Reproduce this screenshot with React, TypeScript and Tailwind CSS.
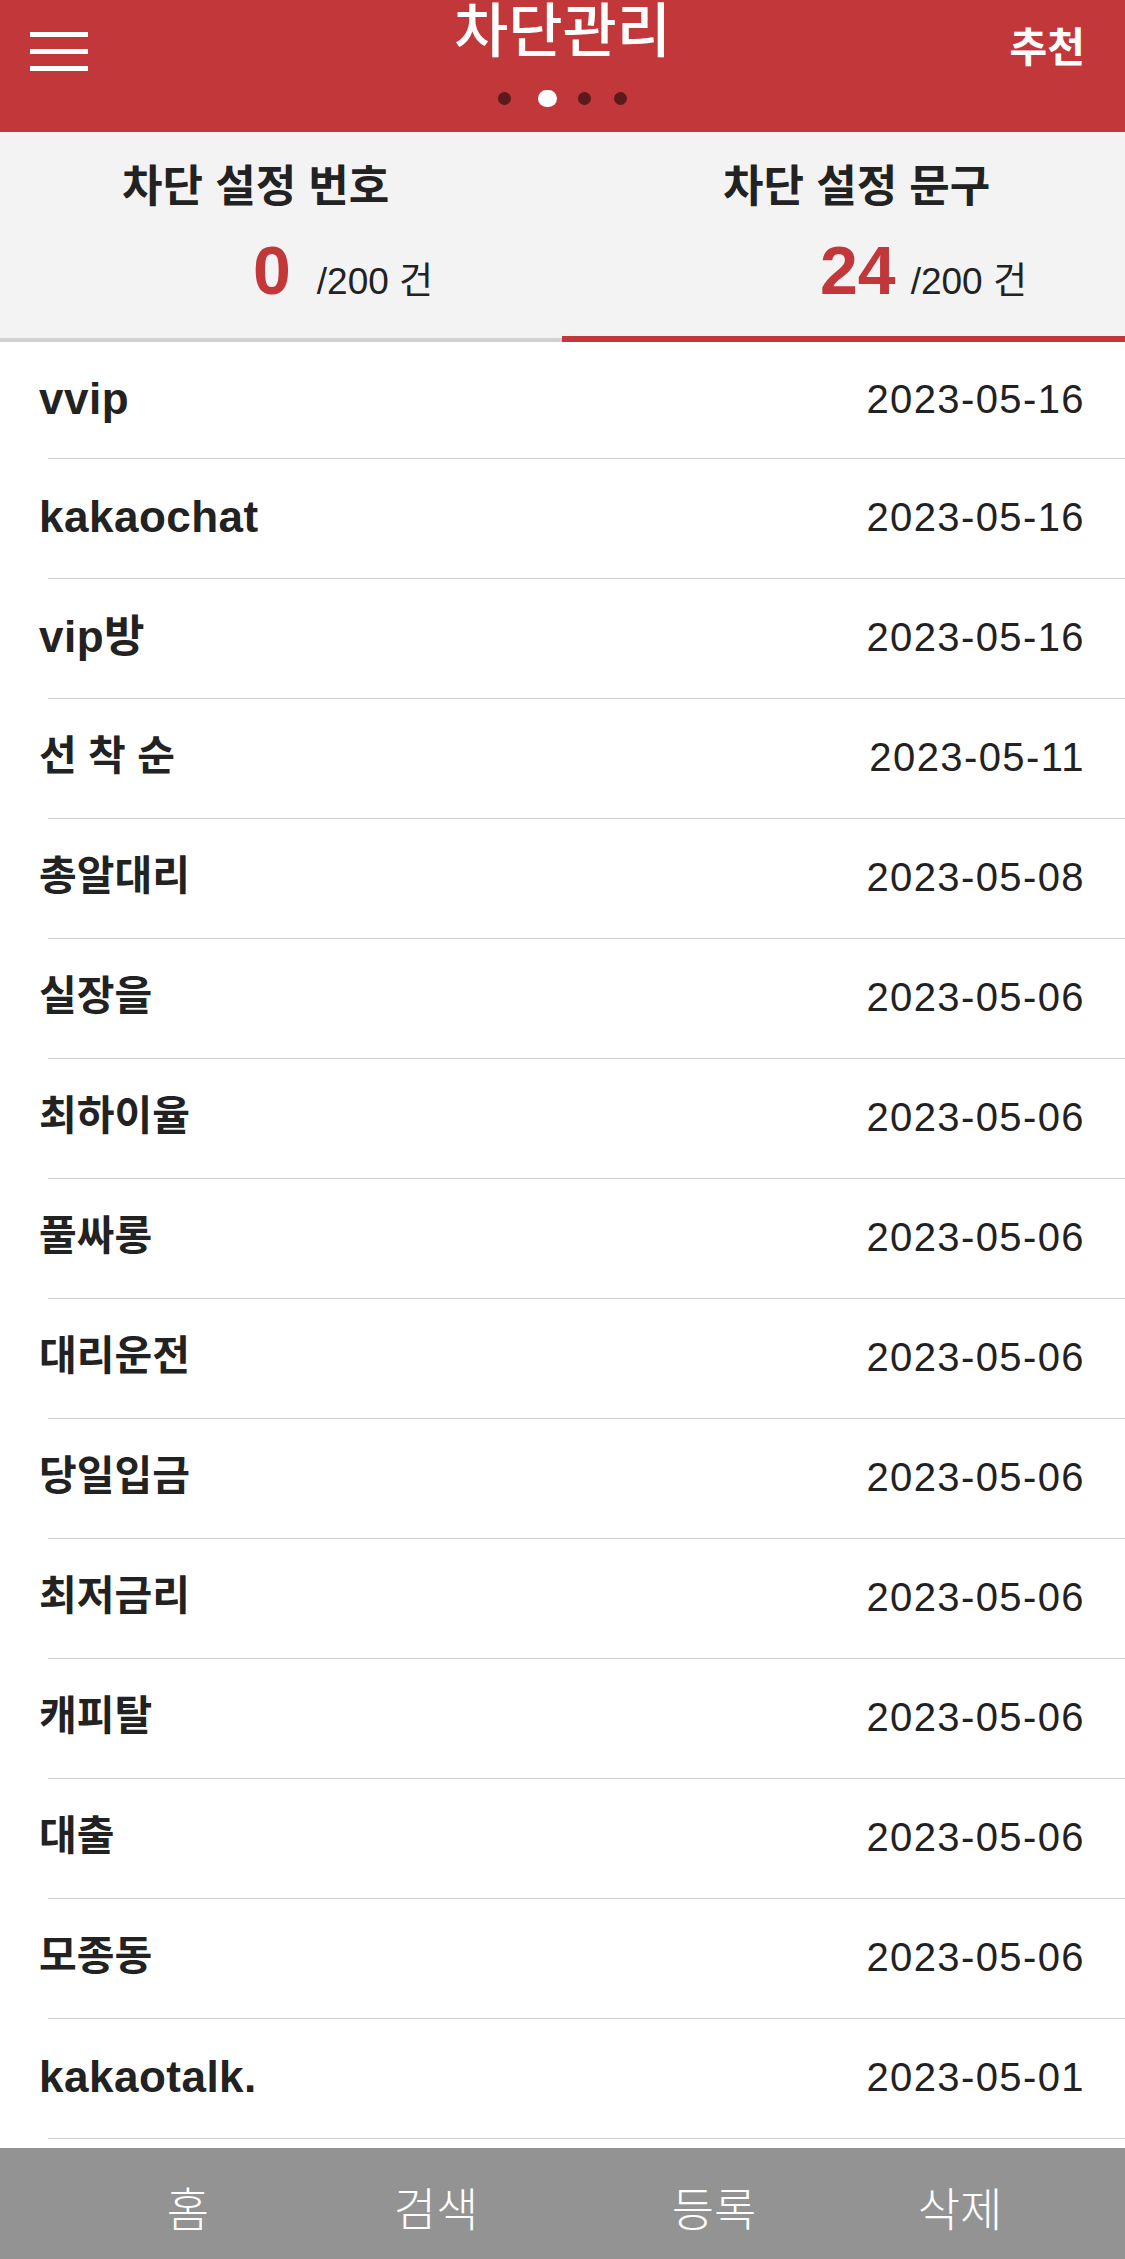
import React from "react";

const rows: { name: string; date: string; latin?: boolean }[] = [
  { name: "vvip", date: "2023-05-16", latin: true },
  { name: "kakaochat", date: "2023-05-16", latin: true },
  { name: "vip방", date: "2023-05-16", latin: true },
  { name: "선 착 순", date: "2023-05-11" },
  { name: "총알대리", date: "2023-05-08" },
  { name: "실장을", date: "2023-05-06" },
  { name: "최하이율", date: "2023-05-06" },
  { name: "풀싸롱", date: "2023-05-06" },
  { name: "대리운전", date: "2023-05-06" },
  { name: "당일입금", date: "2023-05-06" },
  { name: "최저금리", date: "2023-05-06" },
  { name: "캐피탈", date: "2023-05-06" },
  { name: "대출", date: "2023-05-06" },
  { name: "모종동", date: "2023-05-06" },
  { name: "kakaotalk.", date: "2023-05-01", latin: true },
];

export default function App() {
  return (
    <div
      className="w-[1125px] bg-white text-[#222222]"
      style={{ fontFamily: '"Liberation Sans", "Noto Sans CJK KR", sans-serif' }}
    >
      {/* Header */}
      <div className="h-[132px] bg-[#c2373a] grid grid-cols-[1fr_auto_1fr]">
        <div className="pl-[30px] pt-[32px]">
          <div className="w-[58px] flex flex-col gap-[12px]">
            <div className="h-[5px] bg-white" />
            <div className="h-[5px] bg-white" />
            <div className="h-[5px] bg-white" />
          </div>
        </div>
        <div className="flex flex-col items-center">
          <div className="text-white text-[59px] leading-none font-medium mt-[3px]">차단관리</div>
          <div className="flex items-center mt-[28px]">
            <div className="w-[13px] h-[13px] rounded-full bg-[#5c1a1b]" />
            <div className="w-[19px] h-[17px] rounded-full bg-white ml-[27px]" />
            <div className="w-[13px] h-[13px] rounded-full bg-[#5c1a1b] ml-[21px]" />
            <div className="w-[13px] h-[13px] rounded-full bg-[#5c1a1b] ml-[23px]" />
          </div>
        </div>
        <div className="flex justify-end pr-[40px] pt-[28px]">
          <div className="text-white text-[41px] leading-none font-bold">추천</div>
        </div>
      </div>

      {/* Tabs */}
      <div className="h-[210px] bg-[#f3f3f3] flex">
        <div className="w-[562px] flex flex-col border-b-[4px] border-[#d0d0d0]">
          <div className="pl-[122px] pt-[33px] text-[44px] leading-none font-bold">차단 설정 번호</div>
          <div className="pl-[253px] mt-[27px] flex items-baseline">
            <span className="text-[68px] leading-none font-bold text-[#c2373a]">0</span>
            <span className="ml-[26px] text-[37px] leading-none">/200 건</span>
          </div>
        </div>
        <div className="flex-1 flex flex-col border-b-[6px] border-[#c2373a]">
          <div className="pl-[161px] pt-[33px] text-[44px] leading-none font-bold">차단 설정 문구</div>
          <div className="pl-[258px] mt-[27px] flex items-baseline">
            <span className="text-[68px] leading-none font-bold text-[#c2373a]">24</span>
            <span className="ml-[15px] text-[37px] leading-none">/200 건</span>
          </div>
        </div>
      </div>

      {/* List */}
      <div className="flex flex-col">
        {rows.map((r, i) => (
          <div key={i} className="flex flex-col">
            <div
              className={
                (i === 0 ? "h-[116px] pb-[2px] " : "h-[119px] pb-[4px] ") +
                "flex items-center justify-between pl-[39px] pr-[40px]"
              }
            >
              <span
                className={
                  r.latin
                    ? "text-[44px] leading-none font-bold tracking-[0.5px]"
                    : "text-[41px] leading-none font-bold"
                }
              >
                {r.name}
              </span>
              <span className="text-[40px] leading-none tracking-[1.4px]">{r.date}</span>
            </div>
            <div className="ml-[48px] h-[1px] bg-[#cccccc]" />
          </div>
        ))}
      </div>

      {/* Bottom bar */}
      <div className="mt-[9px] h-[111px] bg-[#939393] flex items-center pl-[128px] pt-[12px] text-white text-[46px] leading-none font-light">
        <div className="w-[120px] text-center">홈</div>
        <div className="w-[120px] text-center ml-[128px]">검색</div>
        <div className="w-[120px] text-center ml-[158px]">등록</div>
        <div className="w-[120px] text-center ml-[126px]">삭제</div>
      </div>
    </div>
  );
}
